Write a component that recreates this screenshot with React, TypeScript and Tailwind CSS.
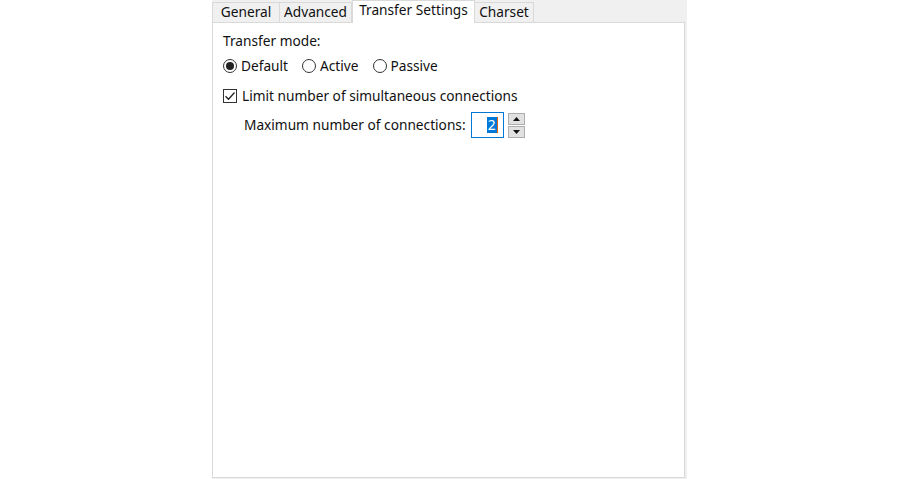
import React from "react";

const font = { fontFamily: '"Noto Sans", "Open Sans", sans-serif' };

function Radio({ checked, label }: { checked?: boolean; label: string }) {
  return (
    <div className="flex items-center">
      <div className="w-[14px] h-[14px] rounded-full border border-[#333] flex items-center justify-center bg-white">
        {checked && <div className="w-[8px] h-[8px] rounded-full bg-[#222]" />}
      </div>
      <span className="ml-[4px]">{label}</span>
    </div>
  );
}

export default function App() {
  return (
    <div className="w-[900px] h-[479px] bg-white overflow-hidden" style={font}>
      <div className="ml-[212px] w-[475px] h-[479px] bg-[#f0f0f0] flex flex-col text-[13.7px] text-[#111]">
        <div className="h-[22px] flex items-end relative">
          <div className="h-[20px] w-[68px] border border-b-0 border-[#d9d9d9] flex items-start justify-center pt-[2px] leading-none">General</div>
          <div className="h-[20px] w-[72px] border border-b-0 border-l-0 border-[#d9d9d9] flex items-start justify-center pt-[2px] leading-none">Advanced</div>
          <div className="h-[23px] w-[123px] -mb-[1px] bg-white border border-b-0 border-[#d9d9d9] flex items-start justify-center pt-[2px] leading-none relative z-10">
            <span>Transfer Settings</span>
          </div>
          <div className="h-[20px] w-[59px] border border-b-0 border-l-0 border-[#d9d9d9] flex items-start justify-center pt-[2px] leading-none">Charset</div>
        </div>
        <div className="w-[473px] h-[456px] bg-white border border-[#d9d9d9] pl-[10px] pt-[9px]">
          <div className="leading-[18px]">Transfer mode:</div>
          <div className="flex items-center gap-[14px] mt-[7px] leading-[18px]">
            <Radio checked label="Default" />
            <Radio label="Active" />
            <Radio label="Passive" />
          </div>
          <div className="flex items-center mt-[12px] leading-[18px]">
            <div className="w-[14px] h-[14px] border border-[#333] bg-white flex items-center justify-center">
              <svg width="12" height="12" viewBox="0 0 12 12">
                <path d="M1.5 6.2 L4.5 9.2 L10.5 2.5" fill="none" stroke="#222" strokeWidth="1.3" />
              </svg>
            </div>
            <span className="ml-[5px]">Limit number of simultaneous connections</span>
          </div>
          <div className="flex items-center ml-[21px] mt-[7px]">
            <span className="leading-[18px]">Maximum number of connections:</span>
            <div className="ml-[5px] w-[33px] h-[26px] border border-[#0078d7] bg-white flex items-center justify-end pr-[5px]">
              <span className="bg-[#0078d7] text-white leading-[16px] px-[1px]">2</span>
              <span className="w-[1px] h-[16px] bg-[#e06010]" />
            </div>
            <div className="ml-[4px] flex flex-col gap-[1px]">
              <div className="w-[17px] h-[12px] bg-[#e1e1e1] border border-[#adadad] flex items-center justify-center">
                <svg width="7" height="4" viewBox="0 0 7 4"><path d="M0 4 L3.5 0 L7 4 Z" fill="#111" /></svg>
              </div>
              <div className="w-[17px] h-[12px] bg-[#e1e1e1] border border-[#adadad] flex items-center justify-center">
                <svg width="7" height="4" viewBox="0 0 7 4"><path d="M0 0 L3.5 4 L7 0 Z" fill="#111" /></svg>
              </div>
            </div>
          </div>
        </div>
      </div>
    </div>
  );
}
